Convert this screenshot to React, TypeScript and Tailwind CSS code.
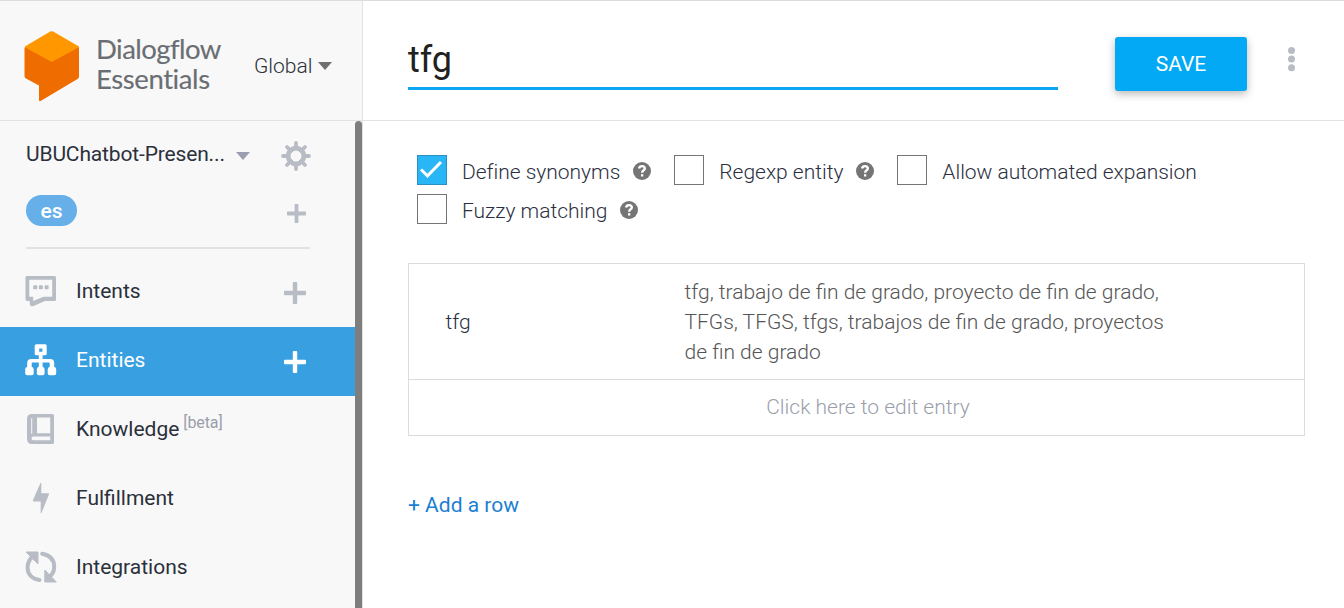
import type { ReactNode } from "react";

function Plus({ size, className }: { size: number; className: string }) {
  return (
    <svg width={size} height={size} viewBox="0 0 22 22" className={className}>
      <path
        d="M9.8 0h2.4q1 0 1 1v7.8H21q1 0 1 1v2.4q0 1-1 1h-7.8V21q0 1-1 1H9.8q-1 0-1-1v-7.8H1q-1 0-1-1V9.8q0-1 1-1h7.8V1q0-1 1-1z"
        fill="currentColor"
      />
    </svg>
  );
}

function Caret({ className }: { className: string }) {
  return (
    <svg width="14" height="8" viewBox="0 0 14 8" className={className}>
      <path d="M0 0h14L7 8z" fill="currentColor" />
    </svg>
  );
}

function Logo() {
  return (
    <svg width="56" height="71" viewBox="0 0 56 71" className="shrink-0">
      <path
        d="M.5 17.5 Q.5 16 2 15.5L28 24l26-8.500q1 .5 1 2V45.500q0 1.500-1.500 2.500L17 69.800q-2 1-2-1V54.500L2 47.500Q.5 46.500.5 45z"
        fill="#ef6c00"
      />
      <path d="M26.200.6q1.500-.8 3 0L54.500 15.200q.5.400.4 1L27.700 31 .8 16.200q0-.6.5-1z" fill="#ff9800" />
    </svg>
  );
}

function Gear() {
  return (
    <svg width="30" height="30" viewBox="0 0 30 30" className="text-[#b7bcc5]">
      <g stroke="currentColor" strokeWidth="3.800" strokeLinecap="round">
        <path d="M15 2v5M15 23v5M2 15h5M23 15h5M6 6l4 4M20 20l4 4M24 6l-4 4M10 20l-4 4" />
      </g>
      <circle cx="15" cy="15" r="7.900" fill="none" stroke="currentColor" strokeWidth="4.800" />
    </svg>
  );
}

function IntentsIcon() {
  return (
    <svg width="32" height="32" viewBox="0 0 32 32" fill="currentColor">
      <path
        fillRule="evenodd"
        d="M1.500 1h28q1.500 0 1.500 1.500v22q0 1.500-1.500 1.500H20L8.500 31Q5 31.800 4.800 29V26H2Q.5 25.500.5 24V2.500Q.5 1 1.500 1zM4.300 4.800v17H8.200v4.200L18.500 21.800h8.700v-17z"
      />
      <rect x="8.200" y="10.200" width="4" height="4" rx="1" />
      <rect x="13.900" y="10.200" width="4" height="4" rx="1" />
      <rect x="19.600" y="10.200" width="4" height="4" rx="1" />
    </svg>
  );
}

function EntitiesIcon() {
  return (
    <svg width="32" height="32" viewBox="0.3 0.3 32 32" fill="currentColor">
      <path
        fillRule="evenodd"
        d="M11.500.5h9q1.500 0 1.500 1.500v8q0 1.500-1.500 1.500h-2.600v3.700h7.600q4 0 4 4V23q2 .5 2 2.500v4q0 2-2 2h-4.500q-2 0-2-2v-4q0-2 2-2.500v-3.200q0-1-1-1h-6.100V23q2 .5 2 2.500v4q0 2-2 2h-3.800q-2 0-2-2v-4q0-2 2-2.500v-4.200H8q-1 0-1 1V23q2 .5 2 2.500v4q0 2-2 2H2.500q-2 0-2-2v-4q0-2 2-2.500v-3.800q0-4 4-4h7.600v-3.700h-2.600Q10 11.500 10 10V2Q10 .5 11.500.5zM14.500 4.800v3.200h3.200V4.800z"
      />
    </svg>
  );
}

function KnowledgeIcon() {
  return (
    <svg width="32" height="32" viewBox="0 0 32 32" fill="currentColor">
      <path
        fillRule="evenodd"
        d="M7 1h20.500Q29 1 29 2.500v27q0 1.500-1.500 1.500H7Q2 31 2 26V6Q2 1 7 1zM7.200 4.700q-1 .2-1 1.300v14.700l1-.3zM12 4.500v15.700h13.200V4.500zM8.200 23.600q-1.700 0-1.700 1.800t1.700 1.800h17v-3.600z"
      />
    </svg>
  );
}

function FulfillmentIcon() {
  return (
    <svg width="32" height="32" viewBox="0 0 32 32" fill="currentColor">
      <path d="M15.500 1q.8-.5.800.500v9.800h7q1 .2.600 1.200L16.500 31q-1 .8-.8-.5V19.500H8.500q-1-.2-.6-1.200z" />
    </svg>
  );
}

function IntegrationsIcon() {
  return (
    <svg width="32" height="32" viewBox="0 0 32 32" fill="none">
      <g stroke="currentColor" strokeWidth="4" strokeLinecap="round">
        <path d="M14.500 29Q3 27 2.600 17 2.500 9 9 4.800" />
        <path d="M17.200 2.800Q29 5 29.200 15.500 29.200 23 23 27" />
      </g>
      <path d="M1 1h12v12zM19.800 19v12h11.500z" fill="currentColor" stroke="currentColor" strokeLinejoin="round" />
    </svg>
  );
}

function Help() {
  return (
    <svg width="18" height="18" viewBox="0 0 18 18">
      <circle cx="9" cy="9" r="9" fill="#757575" />
      <path
        d="M6 6.600Q6.500 4.100 9 4.100q2.800 0 2.800 2.300 0 1.300-1.500 2.100Q9.300 9.200 9.200 10.800"
        fill="none"
        stroke="#fff"
        strokeWidth="2.400"
      />
      <rect x="8" y="12.200" width="2.300" height="2.300" fill="#fff" />
    </svg>
  );
}

function Option({ label, checked, help }: { label: string; checked?: boolean; help?: boolean }) {
  return (
    <div className="flex h-[30px]">
      {checked ? (
        <span className="flex size-[30px] items-center justify-center border border-[#2b8fc0] bg-[#29b6f6]">
          <svg width="24" height="20" viewBox="0 0 24 20">
            <path d="M1 9.500l6.500 6.300L21 2" fill="none" stroke="#fff" strokeWidth="3" />
          </svg>
        </span>
      ) : (
        <span className="size-[30px] border border-[#757575] bg-white" />
      )}
      <span className="ml-[15px] pt-0.5 text-[21px] leading-[30px] tracking-[-0.02px] text-[#2b3041]">{label}</span>
      {help && (
        <span className="ml-[13px] pt-[7px]">
          <Help />
        </span>
      )}
    </div>
  );
}

function NavItem({
  icon,
  label,
  active,
  add,
  beta,
}: {
  icon: ReactNode;
  label: string;
  active?: boolean;
  add?: boolean;
  beta?: boolean;
}) {
  return (
    <div className={active ? "flex h-[69px] items-center bg-[#38a0e1] pl-[25px] text-white" : "flex h-[69px] items-center pl-[25px] text-[#2b303b]"}>
      <span className={active ? "pb-[4px] text-white" : "pb-[4px] text-[#b7bcc5]"}>{icon}</span>
      <span className="ml-[19px] pb-[3px] text-[21px] leading-[30px] font-normal">{label}</span>
      {beta && <span className="ml-1 pb-[16px] text-base leading-5 font-normal tracking-[-0.1px] text-[#9a9eab]">[beta]</span>}
      {add && <Plus size={22} className={active ? "mt-px mr-[49px] ml-auto text-white" : "mt-px mr-[49px] ml-auto text-[#b7bcc5]"} />}
    </div>
  );
}

export default function App() {
  return (
    <div className="flex h-[608px] w-[1344px] overflow-hidden border-t border-[#dadce0] bg-white font-['Roboto',sans-serif] font-light">
      <aside className="flex w-[363px] shrink-0 flex-col border-r border-[#e2e2e2] bg-[#f8f8f8]">
        <div className="flex h-[120px] shrink-0 border-b border-[#e2e2e2] pt-[30px] pl-6">
          <Logo />
          <div className="ml-[16px] w-[126px] pt-[3px] font-['Lato',sans-serif] text-[27.5px] leading-[30px] font-normal whitespace-nowrap text-[#6a6e73] [-webkit-text-stroke:0.15px_#6a6e73]">
            <div className="tracking-[-0.55px]">Dialogflow</div>
            <div className="tracking-[-0.4px]">Essentials</div>
          </div>
          <div className="ml-[32px] flex h-[30px] pt-[20px] text-[21px] leading-[30px] text-[#2b303b]">
            Global
            <Caret className="mt-[11px] ml-[6px] shrink-0 text-[#6f6f6f]" />
          </div>
        </div>
        <div className="flex min-h-0 flex-1">
          <nav className="w-[355px]">
            <div className="ml-[26px] h-[128px] w-[284px] border-b-2 border-[#e2e2e2]">
              <div className="flex pt-[18px]">
                <span className="w-[200px] shrink-0 text-[21px] leading-[30px] font-normal tracking-[-0.15px] whitespace-nowrap text-[#2b303b]">
                  UBUChatbot-Presen...
                </span>
                <Caret className="mt-[13px] ml-[10px] shrink-0 text-[#9a9eb0]" />
                <span className="mt-[2px] ml-[31px] shrink-0">
                  <Gear />
                </span>
              </div>
              <div className="mt-6 flex justify-between">
                <span className="h-[31px] w-[51px] rounded-full bg-[#66afe9] text-center text-[21px] leading-[32px] font-medium text-white">
                  es
                </span>
                <Plus size={19} className="mt-[9px] mr-[4.5px] text-[#b7bcc5]" />
              </div>
            </div>
            <div className="pt-[9px]">
              <NavItem icon={<IntentsIcon />} label="Intents" add />
              <NavItem icon={<EntitiesIcon />} label="Entities" add active />
              <NavItem icon={<KnowledgeIcon />} label="Knowledge" beta />
              <NavItem icon={<FulfillmentIcon />} label="Fulfillment" />
              <NavItem icon={<IntegrationsIcon />} label="Integrations" />
            </div>
          </nav>
          <div className="w-[7px] rounded-t-full bg-[#7e7e7e]" />
        </div>
      </aside>

      <main className="min-w-0 flex-1">
        <header className="flex h-[120px] border-b border-[#e2e2e2] pl-[45px]">
          <div className="h-[89px] w-[650px] border-b-3 border-[#0ba5f1] pt-[35px] text-[36px] leading-[48px] font-normal text-[#212121]">
            tfg
          </div>
          <button className="mt-[36px] ml-[57px] h-[54px] w-[132px] rounded-[3px] bg-[#03a9f4] pt-[2px] text-[21px] font-normal text-white shadow-[0_3px_8px_rgba(0,0,0,0.28)]">
            SAVE
          </button>
          <svg width="8" height="26" viewBox="0 0 8 26" className="mt-[45px] ml-[40px]" fill="#b7bcc5">
            <circle cx="4.500" cy="4.500" r="3.500" />
            <circle cx="4.500" cy="13" r="3.500" />
            <circle cx="4.500" cy="21.700" r="3.500" />
          </svg>
        </header>
        <div className="flex flex-wrap gap-x-[23px] gap-y-[9px] pt-[34px] pl-[54px]">
          <Option label="Define synonyms" checked help />
          <Option label="Regexp entity" help />
          <Option label="Allow automated expansion" />
          <Option label="Fuzzy matching" help />
        </div>
        <section className="mt-[39px] ml-[45px] w-[897px] border border-[#dcdcdc] text-[21px] leading-[30px]">
          <div className="flex h-[116px] border-b border-[#dcdcdc]">
            <div className="w-[275.5px] pt-[43px] pl-[36.5px] text-[#2b3041]">tfg</div>
            <div className="w-[500px] pt-[13px] text-[#555]">
              <div>tfg, trabajo de fin de grado, proyecto de fin de grado,</div>
              <div>TFGs, TFGS, tfgs, trabajos de fin de grado, proyectos</div>
              <div>de fin de grado</div>
            </div>
          </div>
          <div className="h-[55px] pt-[12px] pr-0 pl-[23px] text-center text-[#9a9eab]">Click here to edit entry</div>
        </section>
        <a className="mt-[54px] ml-[45px] block text-[21px] leading-[30px] font-normal text-[#1a7fd4]">+ Add a row</a>
      </main>
    </div>
  );
}
